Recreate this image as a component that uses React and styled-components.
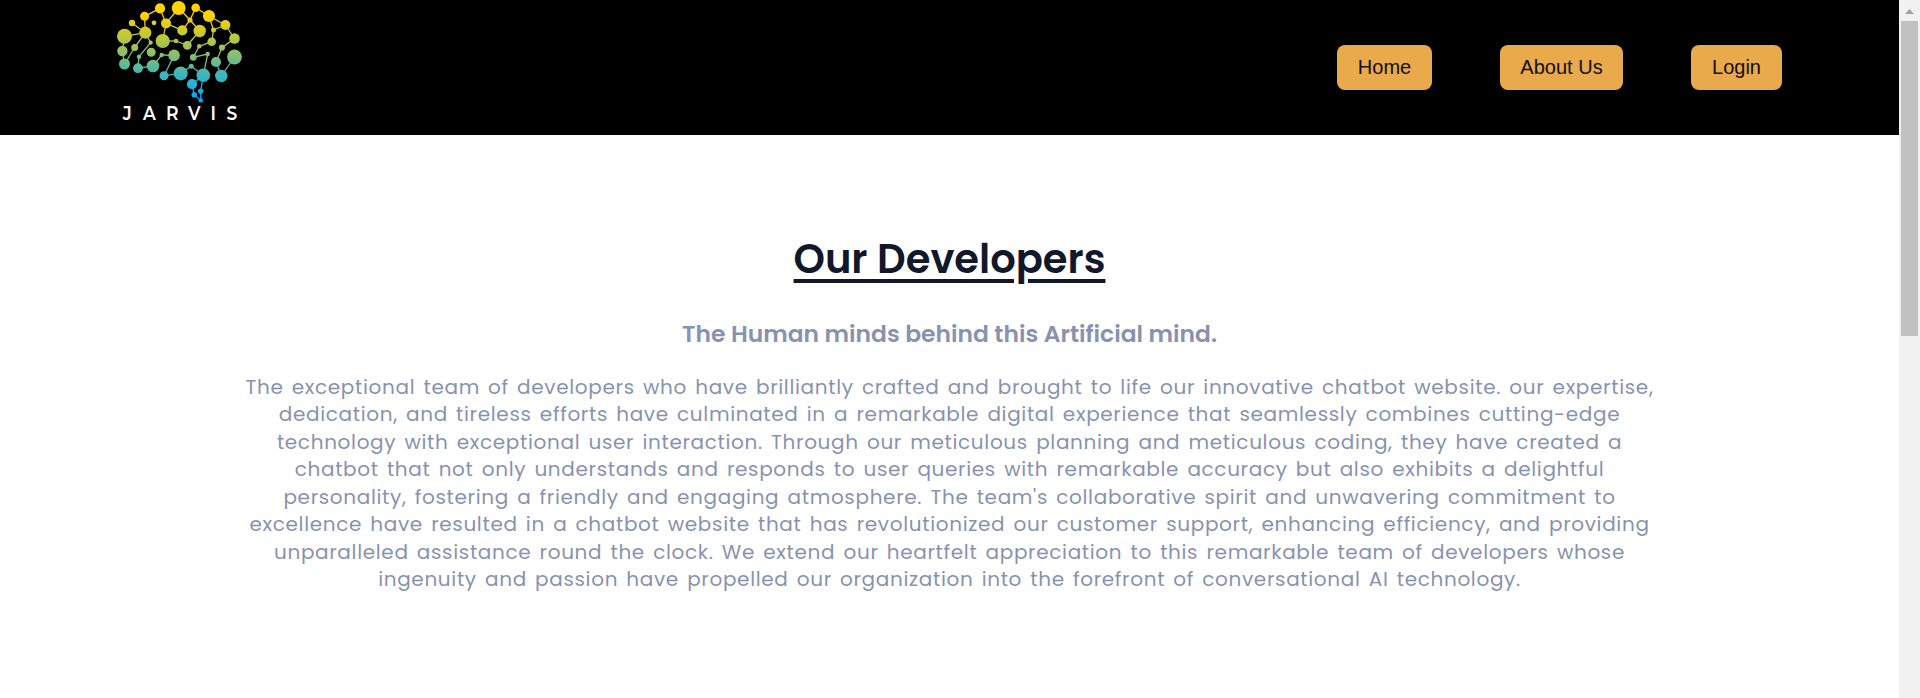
import React from "react";
import styled, { createGlobalStyle } from "styled-components";

const GlobalStyle = createGlobalStyle`
  *, *::before, *::after { box-sizing: border-box; }
  html, body { margin: 0; padding: 0; }
  body { background: #fff; overflow: hidden; }
`;

const Window = styled.div`
  display: flex;
  height: 698px;
`;

const Page = styled.div`
  flex: 1;
  min-width: 0;
  background: #fff;
`;

const Header = styled.header`
  display: flex;
  align-items: center;
  justify-content: space-between;
  height: 135px;
  padding: 0 117px 0 110px;
  background: #000;
`;

const Logo = styled.svg`
  display: block;
  width: 140px;
  height: 135px;
`;

const LogoText = styled.text`
  font: 600 19.4px Montserrat, Lato, sans-serif;
  fill: #fff;
  text-anchor: middle;
`;

const Nav = styled.nav`
  display: flex;
  gap: 68px;
`;

const NavButton = styled.button`
  width: ${(p) => p.$width}px;
  height: 45px;
  padding: 0 0 1px;
  border: 0;
  border-radius: 8px;
  background: #e8aa4a;
  color: #140e05;
  font: 400 20px "Liberation Sans", Arial, sans-serif;
`;

const Developers = styled.main`
  padding-top: 99px;
  text-align: center;
  font-family: Poppins, Inter, sans-serif;
  color: #8892b0;
`;

const Title = styled.h1`
  margin: 0;
  font-size: 40px;
  line-height: 50px;
  font-weight: 600;
  color: #12182b;
  text-decoration: underline;
  text-decoration-thickness: 4px;
  text-underline-offset: 6px;
`;

const Subtitle = styled.h2`
  margin: 34px 0 0;
  font-size: 23.4px;
  line-height: 32px;
  font-weight: 600;
`;

const Description = styled.p`
  margin: 23.8px 0 0;
  font-size: 20px;
  line-height: 27.45px;
  letter-spacing: 0.66px;
  word-spacing: 2.23px;
`;

const Line = styled.span`
  display: block;
  white-space: nowrap;
`;

const Scrollbar = styled.div`
  display: flex;
  flex-direction: column;
  align-items: center;
  width: 21px;
  padding-right: 1px;
  background: #f1f1f1;
`;

const ScrollArrow = styled.svg`
  display: block;
  width: 9px;
  height: 5px;
  margin: 9px 0 7px;
`;

const ScrollThumb = styled.div`
  width: 17px;
  height: 315px;
  background: #c1c1c1;
`;

// Each node of the brain: [x, y, radius]
const nodes = {
  A: [132, 23, 3.2], B: [144.6, 16.3, 4.5], C: [160, 8.4, 5.1], D: [178.7, 8, 6.9],
  E: [195.7, 7.8, 4.3], F: [209, 16, 6.1], G: [154, 22.8, 2.4], H: [166, 23.4, 5],
  I: [190, 20, 2.6], J: [225.4, 25, 5], K: [213.5, 30, 2.5], L: [145.3, 32.7, 6.1],
  M: [124.5, 36.3, 7.5], N: [182.3, 30.4, 5.1], O: [199.7, 31, 6.2], P: [162.7, 41, 7.1],
  Q: [176, 41, 2.3], R: [187.3, 45.3, 4.4], S: [211.7, 41.7, 4.3], T: [234.5, 38.5, 5.3],
  U: [150.7, 42.7, 2.1], V: [134.7, 47.5, 3.5], W: [122.4, 51, 5.2], X: [151.2, 52.3, 4.5],
  Y: [161.7, 55, 2.2], Z: [174.1, 55.4, 5.8], a: [139, 56.7, 2.2], b: [124.5, 64, 5.5],
  c: [199.2, 46.3, 2.2], d: [193.3, 57.3, 3.4], e: [207.7, 54, 2.2], f: [222, 47.6, 3.1],
  g: [234.5, 57, 7.4], h: [216, 62, 5.1], i: [138, 68.2, 4.9], j: [153, 66, 6.3],
  k: [164, 75.7, 4.5], l: [180.7, 73.4, 7], m: [191.2, 66.2, 2.5], n: [203.3, 75.3, 6.8],
  o: [221.3, 76, 6.2], p: [192, 84.2, 5.1], q: [200.7, 91.1, 2.7], r: [194.2, 94.8, 2.7],
  s: [200.8, 100.4, 2.2],
};

const links =
  "AL BL BC CH HD DI EI EF FJ FK KJ KS JT HN NI IO HP LM LV LU MW Wb Vb Ua ai ij jY YZ Zk kl lm mn ne ed dc cS PQ QR RO Tf fh ho go np nq qs pr rs".split(" ");

const letters = [["J", 127.2], ["A", 149.5], ["R", 172.3], ["V", 194.3], ["I", 213.2], ["S", 232]];

const lines = [
  "The exceptional team of developers who have brilliantly crafted and brought to life our innovative chatbot website. our expertise,",
  "dedication, and tireless efforts have culminated in a remarkable digital experience that seamlessly combines cutting-edge",
  "technology with exceptional user interaction. Through our meticulous planning and meticulous coding, they have created a",
  "chatbot that not only understands and responds to user queries with remarkable accuracy but also exhibits a delightful",
  "personality, fostering a friendly and engaging atmosphere. The team's collaborative spirit and unwavering commitment to",
  "excellence have resulted in a chatbot website that has revolutionized our customer support, enhancing efficiency, and providing",
  "unparalleled assistance round the clock. We extend our heartfelt appreciation to this remarkable team of developers whose",
  "ingenuity and passion have propelled our organization into the forefront of conversational AI technology.",
];

// The wordmark is set slightly condensed
const condense = 0.88;

function BrainLogo() {
  return (
    <Logo viewBox="110 0 140 135" role="img" aria-label="Jarvis">
      <defs>
        <linearGradient id="brain" gradientUnits="userSpaceOnUse" x1="0" y1="0" x2="0" y2="102">
          <stop offset="0.14" stopColor="#ffd200" />
          <stop offset="0.5" stopColor="#93c160" />
          <stop offset="0.73" stopColor="#3db6bb" />
          <stop offset="0.96" stopColor="#00aeff" />
        </linearGradient>
      </defs>
      <g stroke="url(#brain)" strokeWidth="1.3">
        {links.map(([from, to]) => (
          <line
            key={from + to}
            x1={nodes[from][0]}
            y1={nodes[from][1]}
            x2={nodes[to][0]}
            y2={nodes[to][1]}
          />
        ))}
      </g>
      <g fill="url(#brain)">
        {Object.entries(nodes).map(([id, [x, y, r]]) => (
          <circle key={id} cx={x} cy={y} r={r} />
        ))}
      </g>
      <g transform={`scale(${condense} 1)`}>
        {letters.map(([letter, x]) => (
          <LogoText key={letter} x={x / condense} y="120.5">{letter}</LogoText>
        ))}
      </g>
    </Logo>
  );
}

export default function App() {
  return (
    <>
      <GlobalStyle />
      <Window>
        <Page>
          <Header>
            <BrainLogo />
            <Nav>
              <NavButton $width={95}>Home</NavButton>
              <NavButton $width={123}>About Us</NavButton>
              <NavButton $width={91}>Login</NavButton>
            </Nav>
          </Header>
          <Developers>
            <Title>Our Developers</Title>
            <Subtitle>The Human minds behind this Artificial mind.</Subtitle>
            <Description>
              {lines.map((text) => (
                <Line key={text}>{text}</Line>
              ))}
            </Description>
          </Developers>
        </Page>
        <Scrollbar>
          <ScrollArrow viewBox="0 0 9 5">
            <path d="M0 5 4.5 0 9 5Z" fill="#a3a3a3" />
          </ScrollArrow>
          <ScrollThumb />
        </Scrollbar>
      </Window>
    </>
  );
}
